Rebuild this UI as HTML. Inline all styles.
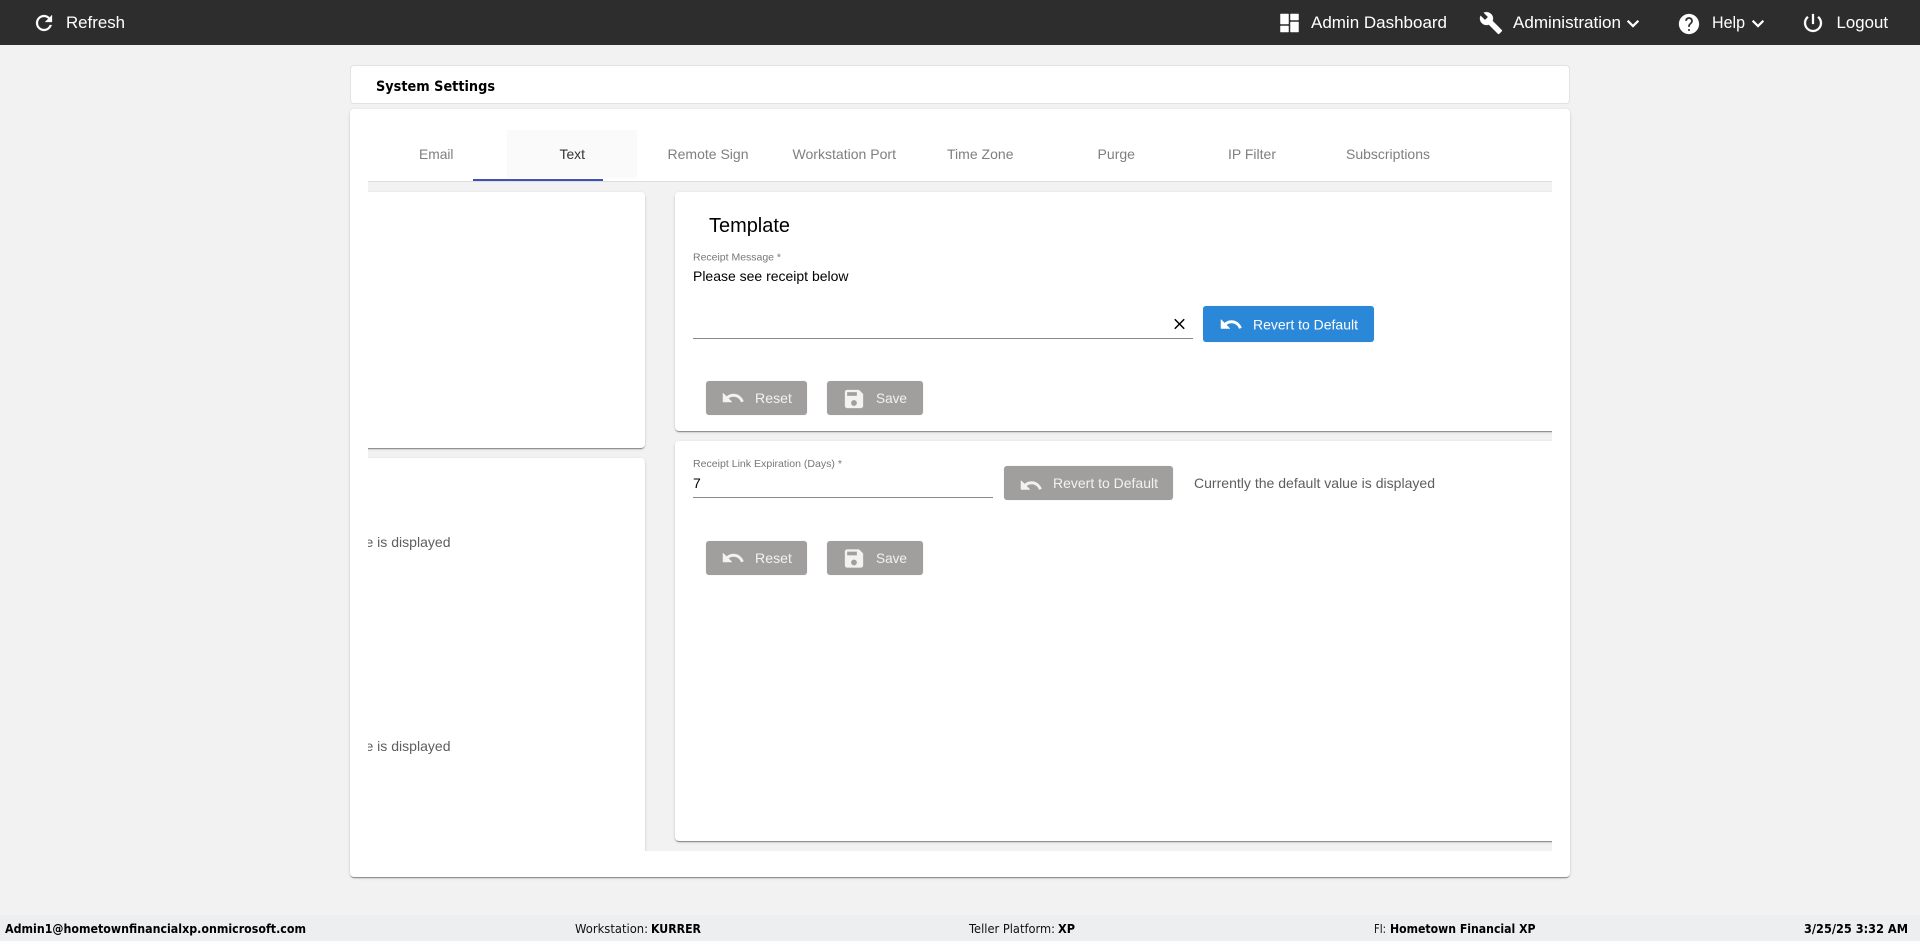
<!DOCTYPE html>
<html lang="en">
<head>
<meta charset="utf-8">
<title>System Settings</title>
<style>
html,body{margin:0;padding:0;width:1920px;height:941px;overflow:hidden;background:#f2f2f2;font-family:"Liberation Sans",Arial,sans-serif}
.box{position:absolute;box-sizing:border-box}
.card{background:#fff;border-radius:4px;box-shadow:0 2px 1px -1px rgba(0,0,0,.28),0 1px 1px 0 rgba(0,0,0,.18),0 1px 3px 0 rgba(0,0,0,.12)}
.btn{position:absolute;box-sizing:border-box;border-radius:3px;background:#a19f9d;box-shadow:0 0 1px rgba(0,0,0,.15)}
svg.ov{position:absolute;left:0;top:0}
svg text{font-family:"Liberation Sans",Arial,sans-serif}
.foot{font-family:"DejaVu Sans","Liberation Sans",sans-serif!important;font-size:12px;fill:#111}
.footb{font-family:"DejaVu Sans","Liberation Sans",sans-serif!important;font-size:12px;font-weight:700;fill:#000}
.tab{font-size:14px;fill:#7f7f7f}
.w{fill:#fff;font-size:17px}
.bt{font-size:14px;fill:#f3f2f1}
</style>
</head>
<body>
<div class="box" style="left:0;top:0;width:1920px;height:45px;background:#2d2d2d"></div>

<div class="box" style="left:350px;top:65px;width:1220px;height:39px;background:#fff;border:1px solid #e2e2e2;border-radius:4px"></div>
<div class="box card" style="left:350px;top:109px;width:1220px;height:768px"></div>

<div class="box" style="left:507px;top:130px;width:130px;height:48px;background:#fafafa"></div>
<div class="box" style="left:368px;top:181px;width:1184px;height:1px;background:#dedede"></div>
<div class="box" style="left:473px;top:179px;width:130px;height:2px;background:#3f51b5"></div>

<div class="box" style="left:368px;top:182px;width:1184px;height:669px;background:#f2f2f2;overflow:hidden">
  <div class="box card" style="left:-40px;top:10px;width:317px;height:256px"></div>
  <div class="box card" style="left:-40px;top:276px;width:317px;height:420px"></div>
  <div class="box card" style="left:307px;top:10px;width:940px;height:239px"></div>
  <div class="box card" style="left:307px;top:259px;width:940px;height:400px"></div>
</div>

<div class="box" style="left:693px;top:338px;width:500px;height:1px;background:#8a8886"></div>
<div class="box" style="left:693px;top:497px;width:300px;height:1px;background:#8a8886"></div>

<div class="btn" style="left:1203px;top:306px;width:171px;height:36px;background:#2b88d8"></div>
<div class="btn" style="left:706px;top:381px;width:101px;height:34px"></div>
<div class="btn" style="left:827px;top:381px;width:96px;height:34px"></div>
<div class="btn" style="left:1004px;top:466px;width:169px;height:34px"></div>
<div class="btn" style="left:706px;top:541px;width:101px;height:34px"></div>
<div class="btn" style="left:827px;top:541px;width:96px;height:34px"></div>

<div class="box" style="left:0;top:915px;width:1920px;height:26px;background:#edeef0"></div>

<svg class="ov" width="1920" height="941" viewBox="0 0 1920 941" xmlns="http://www.w3.org/2000/svg">
  <defs>
    <clipPath id="lc"><rect x="368" y="182" width="277" height="669"/></clipPath>
    <path id="undo" d="M12.5 8c-2.65 0-5.05.99-6.9 2.6L2 7v9h9l-3.62-3.62c1.39-1.16 3.16-1.88 5.12-1.88 3.54 0 6.55 2.31 7.6 5.5l2.37-.78C21.08 11.03 17.15 8 12.5 8z" stroke-width=".5"/>
    <path id="save" d="M17 3H5c-1.11 0-2 .9-2 2v14c0 1.1.89 2 2 2h14c1.1 0 2-.9 2-2V7l-4-4zm-5 16c-1.66 0-3-1.34-3-3s1.34-3 3-3 3 1.34 3 3-1.34 3-3 3zm3-10H5V5h10v4z" stroke-width=".3"/>
    <path id="chev" d="M7.41 8.59L12 13.17l4.59-4.58L18 10l-6 6-6-6 1.41-1.41z" stroke-width=".3"/>
  </defs>

  <!-- top bar -->
  <g fill="#fff" stroke="#fff" stroke-width=".25">
    <path transform="translate(32,11)" d="M17.65 6.35C16.2 4.9 14.21 4 12 4c-4.42 0-7.99 3.58-7.99 8s3.57 8 7.99 8c3.73 0 6.84-2.55 7.73-6h-2.08c-.82 2.33-3.04 4-5.65 4-3.31 0-6-2.69-6-6s2.69-6 6-6c1.66 0 3.14.69 4.22 1.78L13 11h7V4l-2.35 2.35z"/>
    <path transform="translate(1277.5,11)" stroke-width=".5" d="M3 13h8V3H3v10zm0 8h8v-6H3v6zm10 0h8V11h-8v10zm0-18v6h8V3h-8z"/>
    <path transform="translate(1479,11)" d="M22.7 19l-9.1-9.1c.9-2.3.4-5-1.5-6.9-2-2-5-2.4-7.4-1.3L9 6 6 9 1.6 4.7C.4 7.1.9 10.1 2.9 12.1c1.9 1.9 4.6 2.4 6.9 1.5l9.1 9.1c.4.4 1 .4 1.4 0l2.3-2.3c.5-.4.5-1.1.1-1.4z"/>
    <use href="#chev" transform="translate(1621,11.5)"/>
    <path transform="translate(1677,12)" d="M12 2C6.48 2 2 6.48 2 12s4.48 10 10 10 10-4.48 10-10S17.52 2 12 2zm1 17h-2v-2h2v2zm2.07-7.75l-.9.92C13.45 12.9 13 13.5 13 15h-2v-.5c0-1.1.45-2.1 1.17-2.83l1.24-1.26c.37-.36.59-.86.59-1.41 0-1.1-.9-2-2-2s-2 .9-2 2H8c0-2.21 1.79-4 4-4s4 1.79 4 4c0 .88-.36 1.68-.93 2.25z"/>
    <use href="#chev" transform="translate(1746,11.5)"/>
    <path transform="translate(1801,11)" d="M13 3h-2v10h2V3zm4.83 2.17l-1.42 1.42C17.99 7.86 19 9.81 19 12c0 3.87-3.13 7-7 7s-7-3.13-7-7c0-2.19 1.01-4.14 2.58-5.42L6.17 5.17C4.23 6.82 3 9.26 3 12c0 4.97 4.03 9 9 9s9-4.03 9-9c0-2.74-1.23-5.18-3.17-6.83z"/>
  </g>
  <text class="w" x="66" y="28" textLength="59" lengthAdjust="spacingAndGlyphs">Refresh</text>
  <text class="w" x="1311" y="28" textLength="136" lengthAdjust="spacingAndGlyphs">Admin Dashboard</text>
  <text class="w" x="1513" y="28" textLength="108" lengthAdjust="spacingAndGlyphs">Administration</text>
  <text class="w" x="1712" y="28" textLength="33" lengthAdjust="spacingAndGlyphs">Help</text>
  <text class="w" x="1836.5" y="28" textLength="51.5" lengthAdjust="spacingAndGlyphs">Logout</text>

  <!-- title -->
  <text x="376" y="91" style="font-family:'DejaVu Sans',sans-serif;font-size:14px;font-weight:700" fill="#000" textLength="119" lengthAdjust="spacingAndGlyphs">System Settings</text>

  <!-- tabs -->
  <text class="tab" x="419" y="159" textLength="34.5" lengthAdjust="spacingAndGlyphs">Email</text>
  <text class="tab" x="559.5" y="159" style="fill:#333" textLength="25.5" lengthAdjust="spacingAndGlyphs">Text</text>
  <text class="tab" x="667.5" y="159" textLength="81" lengthAdjust="spacingAndGlyphs">Remote Sign</text>
  <text class="tab" x="792.5" y="159" textLength="103.5" lengthAdjust="spacingAndGlyphs">Workstation Port</text>
  <text class="tab" x="947" y="159" textLength="66.5" lengthAdjust="spacingAndGlyphs">Time Zone</text>
  <text class="tab" x="1097.5" y="159" textLength="37.5" lengthAdjust="spacingAndGlyphs">Purge</text>
  <text class="tab" x="1228" y="159" textLength="48" lengthAdjust="spacingAndGlyphs">IP Filter</text>
  <text class="tab" x="1346" y="159" textLength="84" lengthAdjust="spacingAndGlyphs">Subscriptions</text>

  <!-- left clipped panel text -->
  <g clip-path="url(#lc)" font-size="14" fill="#605e5c">
    <text x="209.5" y="547" font-size="14" textLength="241" lengthAdjust="spacingAndGlyphs">Currently the default value is displayed</text>
    <text x="209.5" y="751" font-size="14" textLength="241" lengthAdjust="spacingAndGlyphs">Currently the default value is displayed</text>
  </g>

  <!-- template card -->
  <text x="709" y="232" font-size="20" fill="#000" textLength="81" lengthAdjust="spacingAndGlyphs">Template</text>
  <text x="693" y="260.5" font-size="10.5" fill="#777" textLength="88" lengthAdjust="spacingAndGlyphs">Receipt Message *</text>
  <text x="693" y="281" font-size="14" fill="#000" textLength="155.5" lengthAdjust="spacingAndGlyphs">Please see receipt below</text>
  <path transform="translate(1170.5,315) scale(.75)" fill="#000" d="M19 6.41L17.59 5 12 10.59 6.41 5 5 6.41 10.59 12 5 17.59 6.41 19 12 13.41 17.59 19 19 17.59 13.41 12 19 6.41z"/>
  <use href="#undo" fill="#fff" stroke="#fff" transform="translate(1219,312.5)"/>
  <text x="1253" y="329.5" font-size="14" fill="#fff" textLength="105" lengthAdjust="spacingAndGlyphs">Revert to Default</text>
  <use href="#undo" fill="#f3f2f1" stroke="#f3f2f1" transform="translate(721,386)"/>
  <text class="bt" x="755" y="403" textLength="37" lengthAdjust="spacingAndGlyphs">Reset</text>
  <use href="#save" fill="#f3f2f1" stroke="#f3f2f1" transform="translate(842,387)"/>
  <text class="bt" x="876" y="403" textLength="31" lengthAdjust="spacingAndGlyphs">Save</text>

  <!-- expiration card -->
  <text x="693" y="467" font-size="10.5" fill="#777" textLength="149" lengthAdjust="spacingAndGlyphs">Receipt Link Expiration (Days) *</text>
  <text x="693" y="488" font-size="14" fill="#000">7</text>
  <use href="#undo" fill="#f3f2f1" stroke="#f3f2f1" transform="translate(1019,473.5)"/>
  <text class="bt" x="1053" y="488" textLength="105" lengthAdjust="spacingAndGlyphs">Revert to Default</text>
  <text x="1194" y="488" font-size="14" fill="#605e5c" textLength="241" lengthAdjust="spacingAndGlyphs">Currently the default value is displayed</text>
  <use href="#undo" fill="#f3f2f1" stroke="#f3f2f1" transform="translate(721,546)"/>
  <text class="bt" x="755" y="563" textLength="37" lengthAdjust="spacingAndGlyphs">Reset</text>
  <use href="#save" fill="#f3f2f1" stroke="#f3f2f1" transform="translate(842,546.5)"/>
  <text class="bt" x="876" y="563" textLength="31" lengthAdjust="spacingAndGlyphs">Save</text>

  <!-- footer -->
  <text class="footb" x="5" y="933" textLength="301" lengthAdjust="spacingAndGlyphs">Admin1@hometownfinancialxp.onmicrosoft.com</text>
  <text class="foot" x="575" y="933" textLength="73" lengthAdjust="spacingAndGlyphs">Workstation:</text>
  <text class="footb" x="651" y="933" textLength="50" lengthAdjust="spacingAndGlyphs">KURRER</text>
  <text class="foot" x="969" y="933" textLength="86" lengthAdjust="spacingAndGlyphs">Teller Platform:</text>
  <text class="footb" x="1058" y="933" textLength="17" lengthAdjust="spacingAndGlyphs">XP</text>
  <text class="foot" x="1374" y="933" textLength="12" lengthAdjust="spacingAndGlyphs">FI:</text>
  <text class="footb" x="1390" y="933" textLength="145.5" lengthAdjust="spacingAndGlyphs">Hometown Financial XP</text>
  <text class="footb" x="1804" y="933" textLength="104" lengthAdjust="spacingAndGlyphs">3/25/25 3:32 AM</text>
</svg>
</body>
</html>
